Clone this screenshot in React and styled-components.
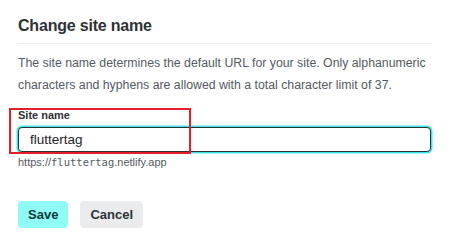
import React, { useState } from 'react';
import styled, { createGlobalStyle } from 'styled-components';

const GlobalStyle = createGlobalStyle`
  html, body {
    margin: 0;
    padding: 0;
    background: #ffffff;
  }
  body {
    font-family: "Liberation Sans", Arial, sans-serif;
    color: #2e3236;
  }
`;

const Dialog = styled.div`
  width: 450px;
  height: 244px;
  box-sizing: border-box;
  padding: 16px 18px 0 18px;
  background: #ffffff;
  overflow: hidden;
`;

const Title = styled.h2`
  margin: 0;
  padding-bottom: 7px;
  font-size: 16px;
  line-height: 20px;
  font-weight: 700;
  letter-spacing: -0.2px;
  color: #2e3236;
  border-bottom: 1px solid #e9ebed;
`;

const Description = styled.p`
  margin: 8px 0 0 0;
  font-size: 12.3px;
  line-height: 22px;
  color: #545a61;
`;

const Field = styled.div`
  position: relative;
  margin-top: 12px;
  display: flex;
  flex-direction: column;
`;

const Highlight = styled.div`
  position: absolute;
  left: -9px;
  top: 0;
  width: 182px;
  height: 46px;
  box-sizing: border-box;
  border: 2px solid #e3202a;
  pointer-events: none;
`;

const Label = styled.label`
  font-size: 11px;
  line-height: 14px;
  font-weight: 700;
  color: #2e3236;
  margin-bottom: 5px;
`;

const Input = styled.input`
  box-sizing: border-box;
  width: 413px;
  height: 25px;
  margin: 0;
  padding: 0 11px;
  border: 1.5px solid #2e3236;
  border-radius: 4px;
  box-shadow: 0 0 0 1.5px #3ee6e6;
  outline: none;
  font-family: inherit;
  font-size: 13.5px;
  font-weight: 400;
  color: #1f2326;
`;

const Hint = styled.div`
  margin-top: 3px;
  font-size: 11px;
  line-height: 14px;
  color: #545a61;
`;

const Mono = styled.span`
  font-family: "DejaVu Sans Mono", monospace;
  font-size: 10.5px;
`;

const Actions = styled.div`
  display: flex;
  gap: 12px;
  margin-top: 32px;
`;

const Button = styled.button`
  height: 27px;
  padding: 0 10px;
  border: none;
  border-radius: 4px;
  font-family: inherit;
  font-size: 13px;
  font-weight: 700;
  cursor: pointer;
  background: ${p => (p.$primary ? '#8ffbf4' : '#e9ebed')};
  color: ${p => (p.$primary ? '#0e3c3c' : '#2e3236')};
`;

const App = () => {
  const [name, setName] = useState('fluttertag');
  return (
    <>
      <GlobalStyle />
      <Dialog>
        <Title>Change site name</Title>
        <Description>
          The site name determines the default URL for your site. Only alphanumeric
          characters and hyphens are allowed with a total character limit of 37.
        </Description>
        <Field>
          <Highlight />
          <Label htmlFor='site-name'>Site name</Label>
          <Input id='site-name' value={name} onChange={e => setName(e.target.value)} />
          <Hint>
            https://<Mono>{name}</Mono>.netlify.app
          </Hint>
        </Field>
        <Actions>
          <Button $primary>Save</Button>
          <Button>Cancel</Button>
        </Actions>
      </Dialog>
    </>
  );
};

export default App;
